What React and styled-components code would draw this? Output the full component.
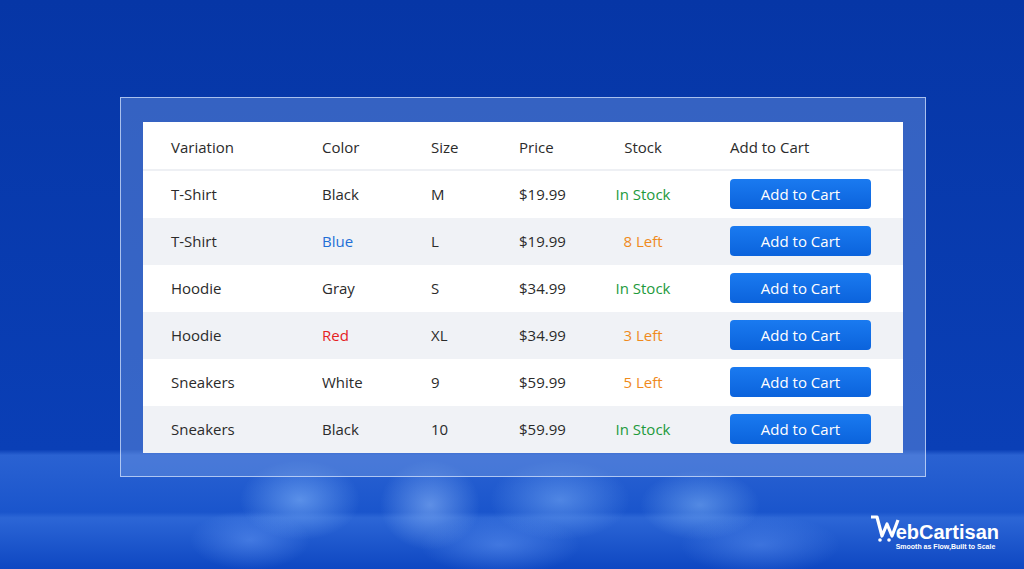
import React from "react";
import styled, { createGlobalStyle } from "styled-components";

const Global = createGlobalStyle`
  html, body { margin: 0; padding: 0; }
  body { font-family: "Open Sans", "Noto Sans", sans-serif; }
`;

const Page = styled.div`
  width: 1024px;
  height: 569px;
  overflow: hidden;
  position: relative;
  box-sizing: border-box;
  padding-top: 97px;
  padding-left: 120px;
  background:
    radial-gradient(ellipse 60px 40px at 300px 500px, rgba(140,190,255,0.55), transparent),
    radial-gradient(ellipse 50px 45px at 430px 505px, rgba(160,200,255,0.5), transparent),
    radial-gradient(ellipse 70px 40px at 560px 500px, rgba(140,190,255,0.45), transparent),
    radial-gradient(ellipse 60px 35px at 700px 505px, rgba(150,200,255,0.45), transparent),
    radial-gradient(ellipse 60px 30px at 250px 540px, rgba(120,170,255,0.4), transparent),
    radial-gradient(ellipse 80px 30px at 500px 545px, rgba(120,170,255,0.4), transparent),
    radial-gradient(ellipse 80px 30px at 760px 545px, rgba(120,170,255,0.35), transparent),
    linear-gradient(180deg, #0636a6 0%, #0a3fb6 79%, #2a62d2 80%, #1a55cc 90%, #2c66d6 91%, #0e47c2 100%);
`;

const Frame = styled.div`
  width: 806px;
  height: 380px;
  box-sizing: border-box;
  padding: 24px 23px 24px 22px;
  background: rgba(110, 150, 225, 0.45);
  border: 1px solid rgba(220, 232, 255, 0.7);
`;

const Table = styled.div`
  background: #fff;
  width: 760px;
`;

const Row = styled.div`
  display: grid;
  grid-template-columns: 151px 109px 88px 84px 80px 47px 140px;
  align-items: center;
  padding-left: 28px;
  height: 47px;
  background: ${(p) => (p.$alt ? "#f0f2f6" : "#fff")};
  border-bottom: ${(p) => (p.$head ? "2px solid #eef0f4" : "none")};
  font-size: 15px;
  color: #2b2b2b;
  & > * { margin-top: ${(p) => (p.$head ? "2px" : "-2px")}; }
`;

const Cell = styled.div`
  color: ${(p) => p.$color || "#2b2b2b"};
  text-align: ${(p) => (p.$center ? "center" : "left")};
  white-space: nowrap;
`;

const Button = styled.button`
  width: 141px;
  height: 30px;
  border: none;
  border-radius: 4px;
  background: linear-gradient(180deg, #1a7af0, #0b63dc);
  color: #fff;
  font-family: inherit;
  font-size: 15px;
  cursor: pointer;
`;

const Logo = styled.div`
  position: absolute;
  right: 25px;
  bottom: 19px;
  display: flex;
  flex-direction: column;
  color: #fff;
`;

const LogoTop = styled.div`
  display: flex;
  align-items: flex-end;
  font-family: "Liberation Sans", Arial, sans-serif;
  font-weight: 700;
  font-size: 20px;
  line-height: 20px;
`;

const Tag = styled.div`
  font-family: "Liberation Sans", Arial, sans-serif;
  font-size: 7px;
  font-weight: 700;
  margin-left: 26px;
  margin-top: 1px;
`;

const rows = [
  ["T-Shirt", "Black", null, "M", "$19.99", "In Stock"],
  ["T-Shirt", "Blue", "#1f6fd6", "L", "$19.99", "8 Left"],
  ["Hoodie", "Gray", null, "S", "$34.99", "In Stock"],
  ["Hoodie", "Red", "#e5231f", "XL", "$34.99", "3 Left"],
  ["Sneakers", "White", null, "9", "$59.99", "5 Left"],
  ["Sneakers", "Black", null, "10", "$59.99", "In Stock"],
];

export default function App() {
  return (
    <Page>
      <Global />
      <Frame>
        <Table>
          <Row $head>
            <Cell>Variation</Cell>
            <Cell>Color</Cell>
            <Cell>Size</Cell>
            <Cell>Price</Cell>
            <Cell $center>Stock</Cell>
            <div />
            <Cell>Add to Cart</Cell>
          </Row>
          {rows.map((r, i) => (
            <Row key={i} $alt={i % 2 === 1}>
              <Cell>{r[0]}</Cell>
              <Cell $color={r[2]}>{r[1]}</Cell>
              <Cell>{r[3]}</Cell>
              <Cell>{r[4]}</Cell>
              <Cell $center $color={r[5] === "In Stock" ? "#1e9a3c" : "#ef8a1c"}>{r[5]}</Cell>
              <div />
              <Button>Add to Cart</Button>
            </Row>
          ))}
        </Table>
      </Frame>
      <Logo>
        <LogoTop>
          <svg width="34" height="28" viewBox="0 0 34 28">
            <path d="M1 3 H7 L12 22 L17 10 L22 22 L28 6" fill="none" stroke="#fff" strokeWidth="3.2" strokeLinejoin="round" />
            <circle cx="10" cy="26" r="1.8" fill="#fff" />
            <circle cx="19" cy="26" r="1.8" fill="#fff" />
          </svg>
          <span style={{ marginLeft: -8 }}>ebCartisan</span>
        </LogoTop>
        <Tag>Smooth as Flow,Built to Scale</Tag>
      </Logo>
    </Page>
  );
}
